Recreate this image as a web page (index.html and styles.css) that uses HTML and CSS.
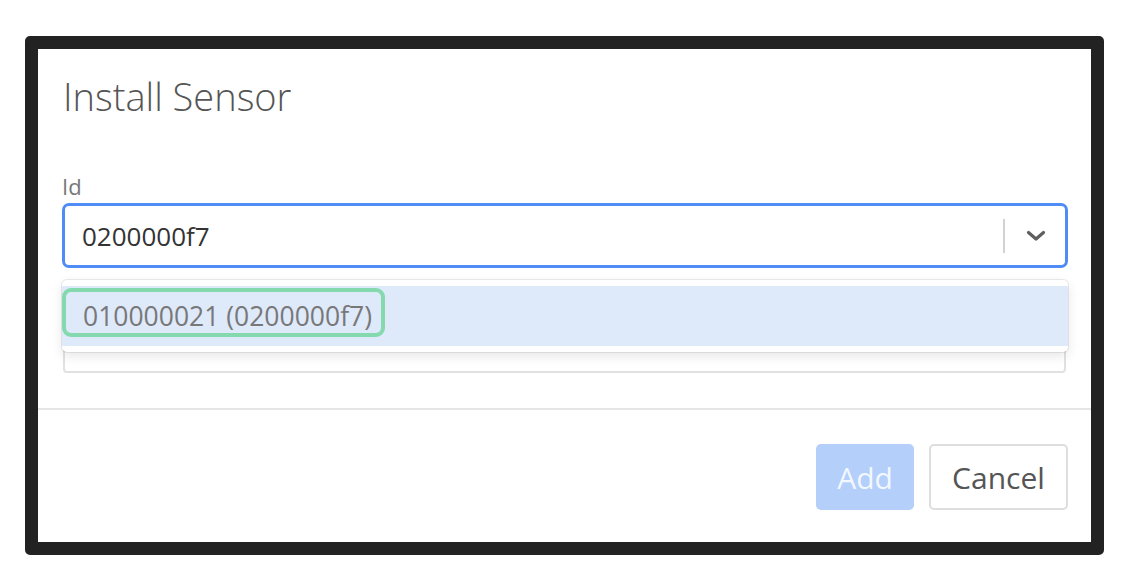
FILE: index.html
```html
<!DOCTYPE html>
<html lang="en">
<head>
    <meta charset="UTF-8">
    <meta name="viewport" content="width=device-width, initial-scale=1.0">
    <link rel="stylesheet" href="styles.css">
    <title>Install Sensor</title>
</head>
<body>

<div class="frame">
    <div class="modal">

        <div class="modal-header">
            <h2>Install Sensor</h2>
        </div>

        <div class="modal-body">
            <label class="field-label">Id</label>

            <div class="select">
                <div class="select-control">
                    <div class="select-value">0200000f7</div>
                    <span class="select-separator"></span>
                    <span class="select-arrow">
                        <svg width="24" height="24" viewBox="0 0 24 24">
                            <path d="M4.5 8.5 L12 15 L19.5 8.5" fill="none" stroke="#5f5f5f" stroke-width="3.2" stroke-linecap="round" stroke-linejoin="round"/>
                        </svg>
                    </span>
                </div>

                <!--open menu of the select, lies over the next field-->
                <div class="select-menu">
                    <div class="select-option">010000021 (0200000f7)</div>
                    <div class="marker"></div>
                </div>
            </div>

            <div class="field-hidden"></div>
        </div>

        <div class="modal-footer">
            <button class="btn btn-primary" disabled>Add</button>
            <button class="btn btn-default">Cancel</button>
        </div>

    </div>
</div>

</body>
</html>
```

FILE: styles.css
```css
body{
    margin: 0;
    background-color: white;
    font-family: "Open Sans", "Liberation Sans", sans-serif;
    padding: 36px 22px 0 25px;
}
.frame{
    border: 13px solid rgb(34, 34, 34);
    border-radius: 5px;
    height: 493px;
    background-color: white;
}
.modal-header{
    padding: 26px 25px 0;
}
.modal-header h2{
    margin: 0;
    font-size: 38px;
    line-height: 42px;
    font-weight: 300;
    color: rgb(85, 85, 85);
}
.modal-body{
    padding: 56px 23px 35px 24px;
    border-bottom: 2px solid rgb(230, 230, 230);
}
.field-label{
    display: block;
    font-size: 22px;
    line-height: 26px;
    color: rgb(120, 120, 120);
    margin-bottom: 4px;
}
.select{
    position: relative;
}
.select-control{
    display: flex;
    align-items: center;
    height: 65px;
    box-sizing: border-box;
    border: 3px solid rgb(80, 140, 245);
    border-radius: 7px;
    padding-left: 17px;
}
.select-value{
    flex: 1;
    font-size: 26px;
    color: rgb(51, 51, 51);
}
.select-separator{
    width: 2px;
    height: 34px;
    background-color: rgb(210, 210, 210);
}
.select-arrow{
    display: flex;
    padding: 0 17px 0 19px;
}
.select-menu{
    position: absolute;
    top: 77px;
    left: 0;
    right: 0;
    z-index: 2;
    background-color: white;
    border-radius: 5px;
    padding: 6px 0;
    box-shadow: 0 0 0 1px rgba(0, 0, 0, 0.08), 0 4px 12px rgba(0, 0, 0, 0.1);
}
.select-option{
    height: 60px;
    line-height: 60px;
    padding-left: 21px;
    background-color: rgb(222, 233, 250);
    font-size: 26.5px;
    color: rgb(120, 120, 120);
}
.marker{
    position: absolute;
    top: 8px;
    left: 0;
    width: 323px;
    height: 49px;
    box-sizing: border-box;
    border: 4px solid rgb(132, 217, 174);
    border-radius: 9px;
}
.field-hidden{
    margin-top: 22px;
    height: 83px;
    box-sizing: border-box;
    border: 2px solid rgb(225, 225, 225);
    border-radius: 4px;
    margin-right: 2px;
    margin-left: 1px;
}
.modal-footer{
    display: flex;
    justify-content: flex-end;
    gap: 15px;
    padding: 34px 23px 0;
}
.btn{
    height: 66px;
    border-radius: 5px;
    font-family: "Open Sans", "Liberation Sans", sans-serif;
    font-size: 30px;
}
.btn-primary{
    width: 98px;
    border: none;
    background-color: rgb(179, 207, 250);
    color: rgba(255, 255, 255, 0.85);
}
.btn-default{
    width: 139px;
    border: 2px solid rgb(222, 222, 222);
    background-color: white;
    color: rgb(85, 85, 85);
}
```
